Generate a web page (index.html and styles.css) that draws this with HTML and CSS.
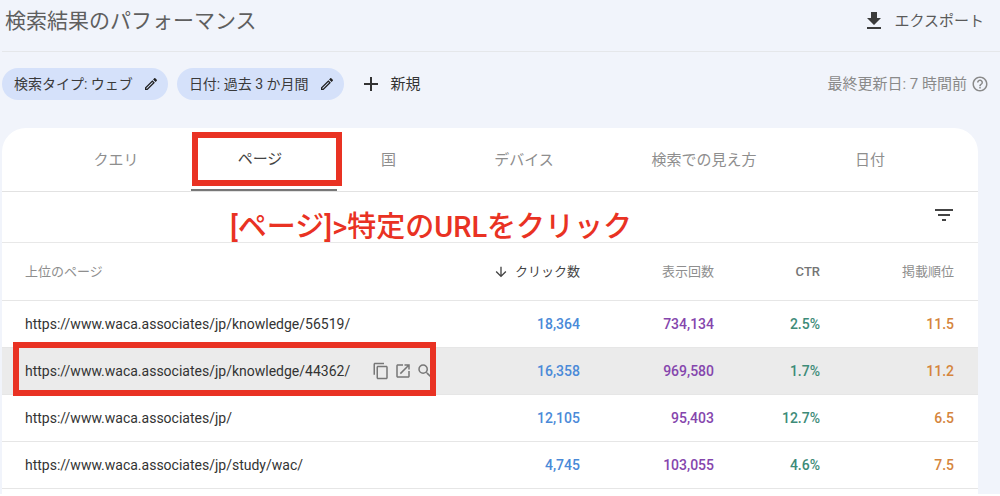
FILE: index.html
```html
<!DOCTYPE html>
<html lang="ja">
<head>
<meta charset="utf-8">
<meta name="viewport" content="width=device-width, initial-scale=1">
<title>検索結果のパフォーマンス</title>
<link rel="stylesheet" href="styles.css">
</head>
<body>
<div class="page">
  <header class="topbar">
    <h1 class="title">検索結果のパフォーマンス</h1>
    <button class="export" type="button">
      <svg class="icon-24" viewBox="0 0 24 24" aria-hidden="true"><path d="M19 9h-4V3H9v6H5l7 7 7-7zM5 18v2h14v-2H5z"/></svg>
      エクスポート
    </button>
  </header>

  <div class="filters">
    <button class="chip" type="button">
      検索タイプ: ウェブ
      <svg class="icon-16" viewBox="0 0 24 24" aria-hidden="true"><path d="M14.06 9.02l.92.92L5.92 19H5v-.92l9.06-9.06M17.66 3c-.25 0-.51.1-.7.29l-1.83 1.83 3.75 3.75 1.83-1.83c.39-.39.39-1.02 0-1.41l-2.34-2.34c-.2-.2-.45-.29-.71-.29zm-3.6 3.19L3 17.25V21h3.75L17.81 9.94l-3.75-3.75z"/></svg>
    </button>
    <button class="chip" type="button">
      日付: 過去 3 か月間
      <svg class="icon-16" viewBox="0 0 24 24" aria-hidden="true"><path d="M14.06 9.02l.92.92L5.92 19H5v-.92l9.06-9.06M17.66 3c-.25 0-.51.1-.7.29l-1.83 1.83 3.75 3.75 1.83-1.83c.39-.39.39-1.02 0-1.41l-2.34-2.34c-.2-.2-.45-.29-.71-.29zm-3.6 3.19L3 17.25V21h3.75L17.81 9.94l-3.75-3.75z"/></svg>
    </button>
    <button class="new" type="button">
      <svg class="icon-24" viewBox="0 0 24 24" aria-hidden="true"><path d="M19 13h-6v6h-2v-6H5v-2h6V5h2v6h6v2z"/></svg>
      新規
    </button>
    <p class="updated">
      最終更新日: 7 時間前
      <svg class="icon-18" viewBox="0 0 24 24" aria-hidden="true"><path d="M11 18h2v-2h-2v2zm1-16C6.480 2 2 6.480 2 12s4.480 10 10 10 10-4.480 10-10S17.520 2 12 2zm0 18c-4.410 0-8-3.590-8-8s3.590-8 8-8 8 3.590 8 8-3.590 8-8 8zm0-14c-2.210 0-4 1.790-4 4h2c0-1.100.9-2 2-2s2 .9 2 2c0 2-3 1.750-3 5h2c0-2.250 3-2.500 3-5 0-2.210-1.790-4-4-4z"/></svg>
    </p>
  </div>

  <main class="card">
    <nav class="tabs">
      <button class="tab" type="button">クエリ</button>
      <button class="tab tab-active" type="button">ページ<span class="mark mark-tab"></span></button>
      <button class="tab" type="button">国</button>
      <button class="tab" type="button">デバイス</button>
      <button class="tab" type="button">検索での見え方</button>
      <button class="tab" type="button">日付</button>
    </nav>

    <div class="toolbar">
      <p class="note">[ページ]&gt;特定のURLをクリック</p>
      <button class="icon-button" type="button" aria-label="フィルタ">
        <svg class="icon-24" viewBox="0 0 24 24" aria-hidden="true"><path d="M10 18h4v-2h-4v2zM3 6v2h18V6H3zm3 7h12v-2H6v2z"/></svg>
      </button>
    </div>

    <table class="report">
      <thead>
        <tr>
          <th class="page-col" scope="col">上位のページ</th>
          <th class="clicks-col sorted" scope="col"><span class="sort-label"><svg class="icon-16" viewBox="0 0 24 24" aria-hidden="true"><path d="M20 12l-1.410-1.410L13 16.170V4h-2v12.170l-5.580-5.590L4 12l8 8 8-8z"/></svg>クリック数</span></th>
          <th class="views-col" scope="col">表示回数</th>
          <th class="ctr-col" scope="col">CTR</th>
          <th class="rank-col" scope="col">掲載順位</th>
        </tr>
      </thead>
      <tbody>
        <tr>
          <td class="page-col"><a class="url" href="#56519">https://www.waca.associates/jp/knowledge/56519/</a></td>
          <td class="clicks">18,364</td><td class="views">734,134</td><td class="ctr">2.5%</td><td class="rank">11.5</td>
        </tr>
        <tr class="hovered">
          <td class="page-col">
            <div class="page-cell">
              <a class="url" href="#44362">https://www.waca.associates/jp/knowledge/44362/</a>
              <div class="actions">
                <button class="icon-button" type="button" aria-label="コピー"><svg class="icon-18" viewBox="0 0 24 24" aria-hidden="true"><path d="M16 1H4c-1.100 0-2 .9-2 2v14h2V3h12V1zm3 4H8c-1.100 0-2 .9-2 2v14c0 1.100.9 2 2 2h11c1.100 0 2-.9 2-2V7c0-1.100-.9-2-2-2zm0 16H8V7h11v14z"/></svg></button>
                <button class="icon-button" type="button" aria-label="新しいタブで開く"><svg class="icon-18" viewBox="0 0 24 24" aria-hidden="true"><path d="M19 19H5V5h7V3H5c-1.110 0-2 .9-2 2v14c0 1.100.89 2 2 2h14c1.100 0 2-.9 2-2v-7h-2v7zM14 3v2h3.590l-9.830 9.830 1.410 1.410L19 6.410V10h2V3h-7z"/></svg></button>
                <button class="icon-button" type="button" aria-label="URL を検査"><svg class="icon-18" viewBox="0 0 24 24" aria-hidden="true"><path d="M15.500 14h-.79l-.28-.27A6.471 6.471 0 0 0 16 9.500 6.500 6.500 0 1 0 9.500 16c1.610 0 3.090-.59 4.230-1.570l.27.28v.79l5 4.990L20.490 19l-4.990-5zm-6 0C7.010 14 5 11.990 5 9.500S7.010 5 9.500 5 14 7.010 14 9.500 11.990 14 9.500 14z"/></svg></button>
              </div>
            </div>
            <span class="mark mark-row"></span>
          </td>
          <td class="clicks">16,358</td><td class="views">969,580</td><td class="ctr">1.7%</td><td class="rank">11.2</td>
        </tr>
        <tr>
          <td class="page-col"><a class="url" href="#jp">https://www.waca.associates/jp/</a></td>
          <td class="clicks">12,105</td><td class="views">95,403</td><td class="ctr">12.7%</td><td class="rank">6.5</td>
        </tr>
        <tr>
          <td class="page-col"><a class="url" href="#wac">https://www.waca.associates/jp/study/wac/</a></td>
          <td class="clicks">4,745</td><td class="views">103,055</td><td class="ctr">4.6%</td><td class="rank">7.5</td>
        </tr>
      </tbody>
    </table>
  </main>
</div>
</body>
</html>
```
FILE: styles.css
```css
* { box-sizing: border-box; }

html { background: #fff; }

body {
  margin: 0;
  color: #3c4043;
  font-family: Roboto, "Noto Sans CJK JP", sans-serif;
  font-size: 15px;
  line-height: 20px;
}

h1, p { margin: 0; font-weight: 400; }

button {
  margin: 0;
  padding: 0;
  border: 0;
  background: none;
  color: inherit;
  font: inherit;
  cursor: pointer;
}

svg { display: block; flex: none; fill: currentColor; }
.icon-16 { width: 16px; height: 16px; }
.icon-18 { width: 18px; height: 18px; }
.icon-24 { width: 24px; height: 24px; }

.page {
  padding-left: 2px;
  background: #f1f4fb;
}

.topbar {
  display: flex;
  align-items: center;
  justify-content: space-between;
  height: 52px;
  padding: 0 16px 10px 3px;
  border-bottom: 1px solid #e5e7ea;
}

.title { color: #5f5f5f; font-size: 21px; }

.export {
  display: flex;
  align-items: center;
  gap: 8px;
  color: #5a5a5a;
}
.export svg { color: #3c3c3c; }

.filters {
  display: flex;
  align-items: center;
  gap: 9px;
  padding: 16px 11px 28px 0;
}

.chip {
  display: flex;
  align-items: center;
  gap: 10px;
  height: 32px;
  padding: 0 9px 0 12px;
  border-radius: 16px;
  background: #d5e1fa;
  color: #3a3a3a;
  font-size: 14px;
}
.chip svg { color: #222; }

.new {
  display: flex;
  align-items: center;
  gap: 8px;
  padding-left: 6px;
  color: #333;
}

.updated {
  display: flex;
  align-items: center;
  gap: 4px;
  margin-left: auto;
  color: #8a8a8a;
}

.card {
  margin-right: 22px;
  padding-bottom: 5px;
  border-radius: 24px 24px 0 0;
  background: #fff;
}

.tabs {
  display: grid;
  grid-template-columns: 150fr 146fr 103fr 168fr 192fr 140fr;
  height: 64px;
  padding: 0 38px 0 39px;
  border-bottom: 1px solid #e2e2e2;
}

.tab { color: #8e8e8e; }

.tab-active {
  position: relative;
  padding-right: 8px;
  border-bottom: 2px solid #777;
  color: #444;
}

.mark {
  position: absolute;
  border: 6px solid #e93223;
  pointer-events: none;
}
.mark-tab { inset: 4px -5px 3px 1px; }
.mark-row { top: -6px; bottom: -2px; left: 11px; width: 423px; }

.toolbar {
  display: flex;
  align-items: center;
  justify-content: space-between;
  height: 51px;
  padding: 0 22px 4px 228px;
  border-bottom: 1px solid #e8e8e8;
}
.toolbar .icon-button { color: #444; }

.note {
  padding-top: 24px;
  color: #e93223;
  font-size: 29px;
  font-weight: 500;
}

.report {
  width: 100%;
  border-collapse: separate;
  border-spacing: 0;
  table-layout: fixed;
}

.report th,
.report td {
  height: 47px;
  padding: 0;
  border-bottom: 1px solid #e6e6e6;
  font-size: 14px;
  font-weight: 500;
  text-align: right;
}

.report th {
  height: 58px;
  color: #8e8e8e;
  font-size: 13px;
  font-weight: 400;
}

.report .page-col { padding-left: 23px; text-align: left; }
.clicks-col { width: 150px; }
.views-col { width: 134px; }
.ctr-col { width: 106px; }
.rank-col { width: 158px; }
.report .rank-col, .report .rank { padding-right: 24px; }
.report .ctr-col { color: #757575; font-weight: 500; }
.report .sorted { color: #444; }

.sort-label {
  display: flex;
  align-items: center;
  justify-content: flex-end;
  gap: 6px;
}

.report td.page-col { position: relative; font-weight: 400; }
.page-cell { display: flex; align-items: center; gap: 22px; }
.url { color: #333; text-decoration: none; white-space: nowrap; }
.actions { display: flex; gap: 4px; color: #777; }

.hovered td { background: #ebebeb; }
.clicks { color: #4a8ad8; }
.views { color: #8546ad; }
.ctr { color: #3d8b78; }
.rank { color: #d5853c; }
```
